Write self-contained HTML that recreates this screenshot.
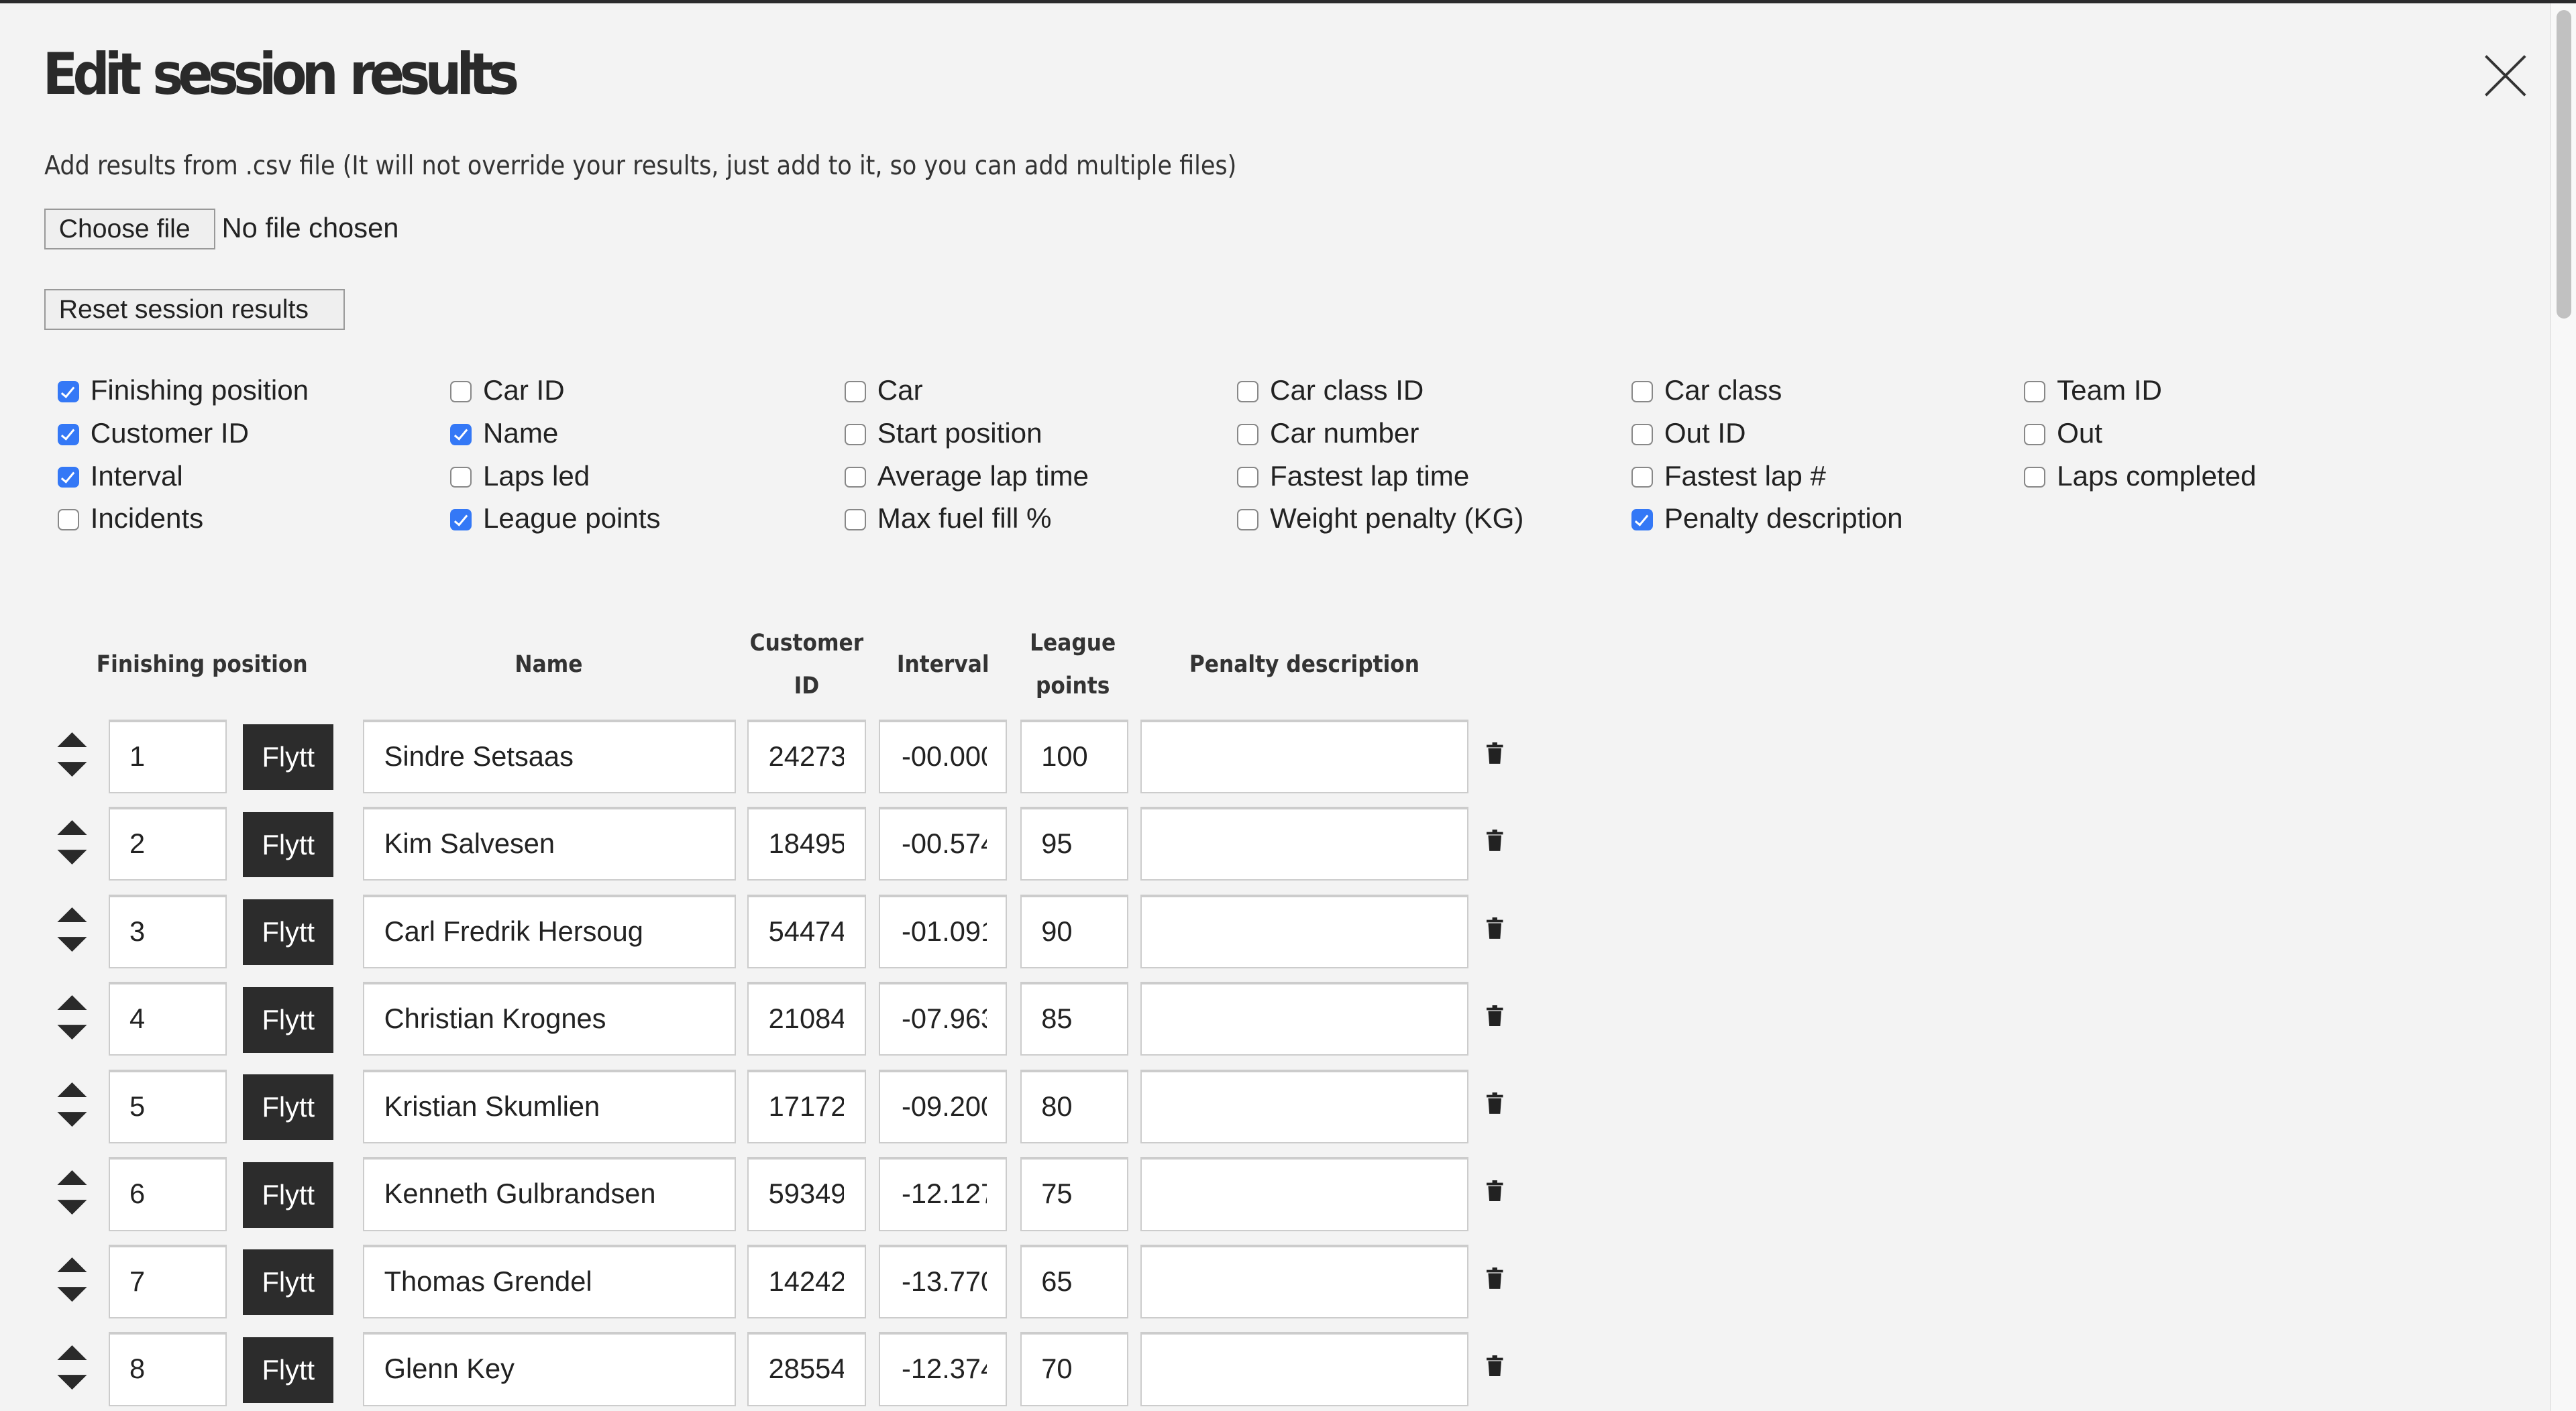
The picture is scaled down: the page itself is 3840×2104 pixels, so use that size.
<!DOCTYPE html>
<html><head><meta charset="utf-8"><style>
html,body{margin:0;padding:0;}
body{width:3840px;height:2104px;overflow:hidden;background:#f3f3f3;font-family:"Liberation Sans",Arial,Helvetica,sans-serif;}
#p{zoom:2.44898;width:1568px;height:859px;position:relative;font-family:"Liberation Sans",Arial,Helvetica,sans-serif;color:#222;}
.a{position:absolute;white-space:nowrap;}
.top{left:0;top:0;width:1568px;height:2px;background:#2a2a2c;}
.sb{left:1552px;top:2px;width:16px;height:857px;background:#f8f8f8;border-left:1px solid #e6e6e6;}
.th{left:1556px;top:6px;width:9px;height:188px;border-radius:5px;background:#c1c1c1;}
h1{position:absolute;left:26px;top:25px;margin:0;font-size:35px;letter-spacing:-3.2px;word-spacing:2px;font-weight:bold;font-family:"DejaVu Sans Condensed","DejaVu Sans",sans-serif;color:#2a2a2a;white-space:nowrap;}
.btn{position:absolute;border:1px solid #999;background:#efefef;font-family:"Liberation Sans",Arial,sans-serif;font-size:16px;padding:0 8px;height:25px;line-height:24px;box-sizing:border-box;}
.cb{position:absolute;width:13px;height:13px;border:1px solid #888;border-radius:3px;background:#fff;box-sizing:border-box;}
.cb.on{background:#3478f6;border-color:#3478f6;}
.cb.on:after{content:"";position:absolute;left:3.5px;top:1px;width:3px;height:7px;border:solid #fff;border-width:0 1.4px 1.4px 0;transform:rotate(40deg);}
.lb{position:absolute;font-family:"Liberation Sans",Arial,sans-serif;font-size:17.2px;color:#222;white-space:nowrap;}
.hd{position:absolute;font-size:14.2px;font-weight:bold;text-align:center;font-family:"DejaVu Sans Condensed","DejaVu Sans",sans-serif;color:#333;line-height:26px;}
.in{position:absolute;background:#fff;border:1px solid #ccc;border-top:2px solid #ccc;height:45px;box-sizing:border-box;font-family:"Liberation Sans",Arial,sans-serif;font-size:17px;line-height:42px;padding-left:12px;overflow:hidden;white-space:nowrap;}
.fl{position:absolute;background:#2c2c2c;color:#fff;font-family:"Liberation Sans",Arial,sans-serif;font-size:17px;width:55px;height:40px;line-height:40px;text-align:center;}
</style></head><body><div id="p">
<div class="a top"></div>
<div class="a sb"></div><div class="a th"></div>
<h1>Edit session results</h1>
<svg class="a" style="left:1512px;top:33px" width="26" height="26" viewBox="0 0 26 26"><path d="M1 1L25 25M25 1L1 25" stroke="#333" stroke-width="1.6"/></svg>
<div class="a" style="left:27px;top:92px;font-size:15.9px;font-family:'DejaVu Sans Condensed','DejaVu Sans',sans-serif;color:#333">Add results from .csv file (It will not override your results, just add to it, so you can add multiple files)</div>
<div class="btn" style="left:27px;top:127px;width:104px">Choose file</div>
<div class="a" style="left:135px;top:129px;font-size:17px">No file chosen</div>
<div class="btn" style="left:27px;top:176px;width:183px">Reset session results</div>
<div class="cb on" style="left:35px;top:232px"></div><div class="lb" style="left:55px;top:228px">Finishing position</div>
<div class="cb on" style="left:35px;top:258px"></div><div class="lb" style="left:55px;top:254px">Customer ID</div>
<div class="cb on" style="left:35px;top:284px"></div><div class="lb" style="left:55px;top:280px">Interval</div>
<div class="cb" style="left:35px;top:310px"></div><div class="lb" style="left:55px;top:306px">Incidents</div>
<div class="cb" style="left:274px;top:232px"></div><div class="lb" style="left:294px;top:228px">Car ID</div>
<div class="cb on" style="left:274px;top:258px"></div><div class="lb" style="left:294px;top:254px">Name</div>
<div class="cb" style="left:274px;top:284px"></div><div class="lb" style="left:294px;top:280px">Laps led</div>
<div class="cb on" style="left:274px;top:310px"></div><div class="lb" style="left:294px;top:306px">League points</div>
<div class="cb" style="left:514px;top:232px"></div><div class="lb" style="left:534px;top:228px">Car</div>
<div class="cb" style="left:514px;top:258px"></div><div class="lb" style="left:534px;top:254px">Start position</div>
<div class="cb" style="left:514px;top:284px"></div><div class="lb" style="left:534px;top:280px">Average lap time</div>
<div class="cb" style="left:514px;top:310px"></div><div class="lb" style="left:534px;top:306px">Max fuel fill %</div>
<div class="cb" style="left:753px;top:232px"></div><div class="lb" style="left:773px;top:228px">Car class ID</div>
<div class="cb" style="left:753px;top:258px"></div><div class="lb" style="left:773px;top:254px">Car number</div>
<div class="cb" style="left:753px;top:284px"></div><div class="lb" style="left:773px;top:280px">Fastest lap time</div>
<div class="cb" style="left:753px;top:310px"></div><div class="lb" style="left:773px;top:306px">Weight penalty (KG)</div>
<div class="cb" style="left:993px;top:232px"></div><div class="lb" style="left:1013px;top:228px">Car class</div>
<div class="cb" style="left:993px;top:258px"></div><div class="lb" style="left:1013px;top:254px">Out ID</div>
<div class="cb" style="left:993px;top:284px"></div><div class="lb" style="left:1013px;top:280px">Fastest lap #</div>
<div class="cb on" style="left:993px;top:310px"></div><div class="lb" style="left:1013px;top:306px">Penalty description</div>
<div class="cb" style="left:1232px;top:232px"></div><div class="lb" style="left:1252px;top:228px">Team ID</div>
<div class="cb" style="left:1232px;top:258px"></div><div class="lb" style="left:1252px;top:254px">Out</div>
<div class="cb" style="left:1232px;top:284px"></div><div class="lb" style="left:1252px;top:280px">Laps completed</div>
<div class="hd" style="left:40px;width:166px;top:392px">Finishing position</div>
<div class="hd" style="left:221px;width:226px;top:392px">Name</div>
<div class="hd" style="left:451px;width:80px;top:379px">Customer<br>ID</div>
<div class="hd" style="left:535px;width:78px;top:392px">Interval</div>
<div class="hd" style="left:619px;width:68px;top:379px">League<br>points</div>
<div class="hd" style="left:694px;width:200px;top:392px">Penalty description</div>
<div id="rows"></div>
</div>
<script>
var d=[["1","Sindre Setsaas","24273","-00.000","100"],["2","Kim Salvesen","18495","-00.574","95"],["3","Carl Fredrik Hersoug","54474","-01.091","90"],["4","Christian Krognes","21084","-07.963","85"],["5","Kristian Skumlien","17172","-09.200","80"],["6","Kenneth Gulbrandsen","59349","-12.127","75"],["7","Thomas Grendel","14242","-13.770","65"],["8","Glenn Key","28554","-12.374","70"]];
var h="";
d.forEach(function(r,i){var t=438+i*53.3;
h+='<svg class="a" style="left:34px;top:'+(t+8)+'px" width="20" height="30" viewBox="0 0 20 30"><path d="M10 0L19 9H1Z M1 18H19L10 27Z" fill="#2a2a2a"/></svg>';
h+='<div class="in" style="left:66px;top:'+t+'px;width:72px">'+r[0]+'</div>';
h+='<div class="fl" style="left:148px;top:'+(t+3)+'px">Flytt</div>';
h+='<div class="in" style="left:221px;top:'+t+'px;width:227px">'+r[1]+'</div>';
h+='<div class="in" style="left:455px;top:'+t+'px;width:72px;padding-right:12px"><div style="width:46px;overflow:hidden">'+r[2]+'</div></div>';
h+='<div class="in" style="left:535px;top:'+t+'px;width:78px;padding-left:13px"><div style="width:52px;overflow:hidden">'+r[3]+'</div></div>';
h+='<div class="in" style="left:621px;top:'+t+'px;width:66px">'+r[4]+'</div>';
h+='<div class="in" style="left:694px;top:'+t+'px;width:200px"></div>';
h+='<svg class="a" style="left:905px;top:'+(t+14)+'px" width="10" height="13" viewBox="0 0 10 13"><path d="M0 1.5H10V3H0Z M3.5 0H6.5V1.5H3.5Z M1 3.5H9L8.3 13H1.7Z" fill="#222"/></svg>';
});
document.getElementById("rows").outerHTML=h;
</script>
</body></html>
